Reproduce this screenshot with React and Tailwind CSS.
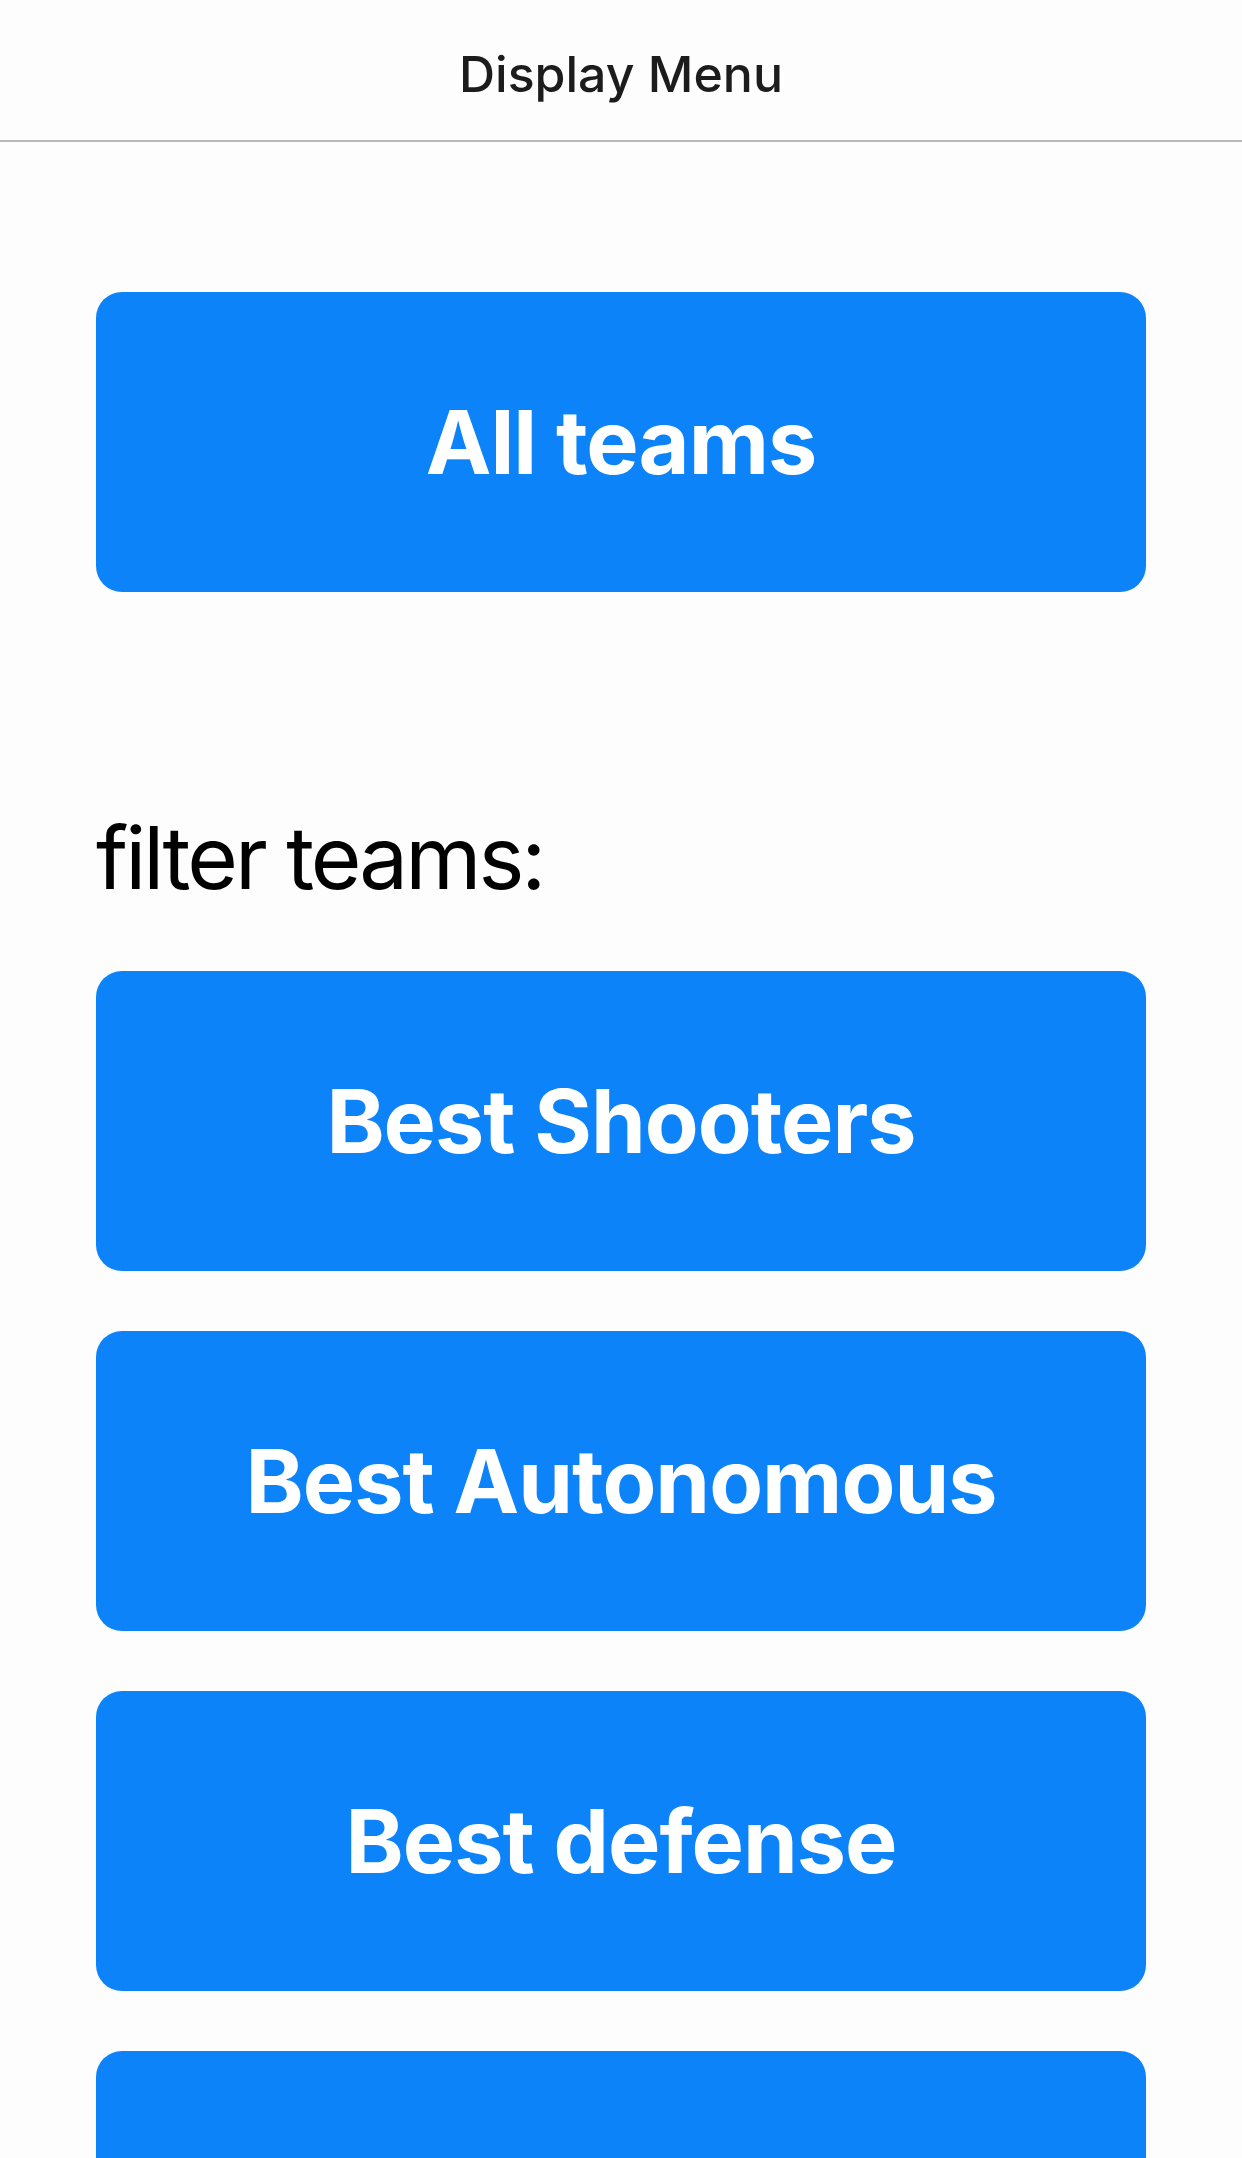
const filters = ["Best Shooters", "Best Autonomous", "Best defense"];

function BigButton({ label }) {
  return (
    <button className="flex h-[300px] w-full items-center justify-center rounded-[26px] bg-[#0d83fa] text-[88px] font-bold tracking-[-1px] text-white">
      {label}
    </button>
  );
}

export default function App() {
  return (
    <div className="min-h-[2158px] bg-[#fdfdfd] font-['Inter',sans-serif]">
      <header className="flex h-[142px] items-center justify-center border-b-2 border-[#b8b8b8] pt-[8px]">
        <h1 className="text-[50px] font-medium text-[#1c1c1c]">Display Menu</h1>
      </header>

      <main className="px-[96px] pt-[150px]">
        <BigButton label="All teams" />

        <p className="mt-[222px] text-[87px] leading-none tracking-[-3px] text-black">filter teams:</p>

        <div className="mt-[70px] flex flex-col gap-[60px]">
          {filters.map((f) => (
            <BigButton key={f} label={f} />
          ))}
          {/* next button continues below the fold */}
          <BigButton label="" />
        </div>
      </main>
    </div>
  );
}
